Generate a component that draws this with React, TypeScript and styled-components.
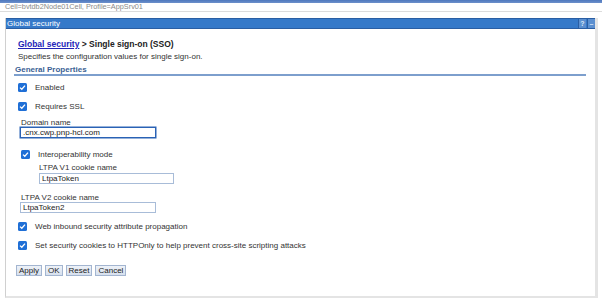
import React from "react";
import styled, { createGlobalStyle } from "styled-components";

const Global = createGlobalStyle`
  html, body { margin: 0; padding: 0; background: #ffffff; }
  body { font-family: "Liberation Sans", Arial, sans-serif; font-size: 8px; color: #333; width: 602px; height: 300px; overflow: hidden; }
`;

const Page = styled.div`
  display: flex;
  flex-direction: column;
  height: 300px;
`;

const TopLine = styled.div`
  height: 3px;
  background: linear-gradient(#4e78bd, #6d90cb);
`;

const CellInfo = styled.div`
  height: 8px;
  line-height: 8px;
  padding-left: 5px;
  color: #8a8a8a;
  font-size: 7.3px;
  border-bottom: 1px solid #dcdcdc;
`;

const Panel = styled.div`
  margin: 6px 4px 2px 5px;
  flex: 1;
  display: flex;
  flex-direction: column;
  border: 1px solid #d0d0d0;
  border-top: none;
  border-right: 3px solid #e4e4e4;
  border-bottom: 2px solid #e4e4e4;
`;

const PanelHeader = styled.div`
  height: 9px;
  display: flex;
  align-items: center;
  justify-content: space-between;
  background: #3579c9;
  border-top: 1px solid #2a5ea3;
  border-bottom: 1px solid #2a5ea3;
  color: #fff;
  font-size: 8px;
  padding-left: 1px;
`;

const HeaderTools = styled.div`
  display: flex;
  gap: 1px;
  height: 9px;
`;

const ToolBtn = styled.span`
  width: 7px;
  height: 9px;
  background: #5b8fd0;
  color: #d8e6f6;
  font-size: 7px;
  font-weight: bold;
  line-height: 9px;
  text-align: center;
  border-left: 1px solid #2a5ea3;
`;

const Body = styled.div`
  display: flex;
  flex-direction: column;
  padding: 0 9px 0 8px;
`;

const Breadcrumb = styled.div`
  margin: 10px 0 0 4px;
  height: 10px;
  line-height: 10px;
  font-weight: bold;
  font-size: 8.5px;
  color: #222;
`;

const Crumb = styled.a`
  color: #2323b8;
  text-decoration: underline;
`;

const Description = styled.div`
  margin: 3px 0 0 4px;
  height: 10px;
  line-height: 10px;
  color: #333;
`;

const SectionTitle = styled.div`
  margin-top: 4px;
  padding-left: 1px;
  height: 8px;
  line-height: 8px;
  font-weight: bold;
  color: #3b5f94;
  border-bottom: 2px solid #7d9fcd;
`;

const CheckRow = styled.label<{ $indent?: number; $top: number }>`
  display: flex;
  align-items: center;
  gap: 8px;
  height: 10px;
  margin-top: ${(p) => p.$top}px;
  margin-left: ${(p) => 4 + (p.$indent || 0)}px;
  color: #333;
`;

const Box = styled.span`
  width: 9px;
  height: 9px;
  border-radius: 1.5px;
  background: #1f6fd6;
  display: flex;
  align-items: center;
  justify-content: center;
`;

const FieldLabel = styled.div<{ $indent: number; $top: number }>`
  margin-top: ${(p) => p.$top}px;
  margin-left: ${(p) => p.$indent}px;
  height: 8px;
  line-height: 8px;
  color: #333;
`;

const TextInput = styled.div<{ $indent: number; $width: number; $focused?: boolean; $top?: number }>`
  margin-top: ${(p) => p.$top || 0}px;
  margin-left: ${(p) => p.$indent}px;
  width: ${(p) => p.$width}px;
  height: 9px;
  line-height: 9px;
  padding-left: 2px;
  box-sizing: content-box;
  border: 1px solid ${(p) => (p.$focused ? "#2a62b5" : "#a8bcd8")};
  box-shadow: ${(p) => (p.$focused ? "0 0 0 0.5px #2a62b5" : "none")};
  color: #222;
  font-size: 8px;
  white-space: nowrap;
  overflow: hidden;
`;

const Buttons = styled.div`
  display: flex;
  gap: 3px;
  margin: 15px 0 0 2px;
`;

const Button = styled.button`
  height: 11px;
  padding: 0 2px;
  font-family: "Liberation Sans", Arial, sans-serif;
  font-size: 8px;
  line-height: 9px;
  color: #222;
  background: linear-gradient(#eef2f8, #d6e0ee);
  border: 1px solid #a3b5d0;
  border-radius: 0;
`;

const Check = () => (
  <Box>
    <svg width="7" height="7" viewBox="0 0 7 7">
      <path d="M1 3.6 L2.8 5.3 L6 1.6" fill="none" stroke="#fff" strokeWidth="1.3" />
    </svg>
  </Box>
);

export default function App() {
  return (
    <Page>
      <Global />
      <TopLine />
      <CellInfo>Cell=bvtdb2Node01Cell, Profile=AppSrv01</CellInfo>
      <Panel>
        <PanelHeader>
          <span>Global security</span>
          <HeaderTools>
            <ToolBtn>?</ToolBtn>
            <ToolBtn>–</ToolBtn>
          </HeaderTools>
        </PanelHeader>
        <Body>
          <Breadcrumb>
            <Crumb>Global security</Crumb> &gt; Single sign-on (SSO)
          </Breadcrumb>
          <Description>Specifies the configuration values for single sign-on.</Description>
          <SectionTitle>General Properties</SectionTitle>
          <CheckRow $top={6}><Check />Enabled</CheckRow>
          <CheckRow $top={9}><Check />Requires SSL</CheckRow>
          <FieldLabel $indent={7} $top={8}>Domain name</FieldLabel>
          <TextInput $indent={6} $width={132} $focused>.cnx.cwp.pnp-hcl.com</TextInput>
          <CheckRow $top={11} $indent={3}><Check />Interoperability mode</CheckRow>
          <FieldLabel $indent={25} $top={5}>LTPA V1 cookie name</FieldLabel>
          <TextInput $indent={25} $width={131} $top={1}>LtpaToken</TextInput>
          <FieldLabel $indent={7} $top={10}>LTPA V2 cookie name</FieldLabel>
          <TextInput $indent={6} $width={132}>LtpaToken2</TextInput>
          <CheckRow $top={8}><Check />Web inbound security attribute propagation</CheckRow>
          <CheckRow $top={9}><Check />Set security cookies to HTTPOnly to help prevent cross-site scripting attacks</CheckRow>
          <Buttons>
            <Button>Apply</Button>
            <Button>OK</Button>
            <Button>Reset</Button>
            <Button>Cancel</Button>
          </Buttons>
        </Body>
      </Panel>
    </Page>
  );
}
